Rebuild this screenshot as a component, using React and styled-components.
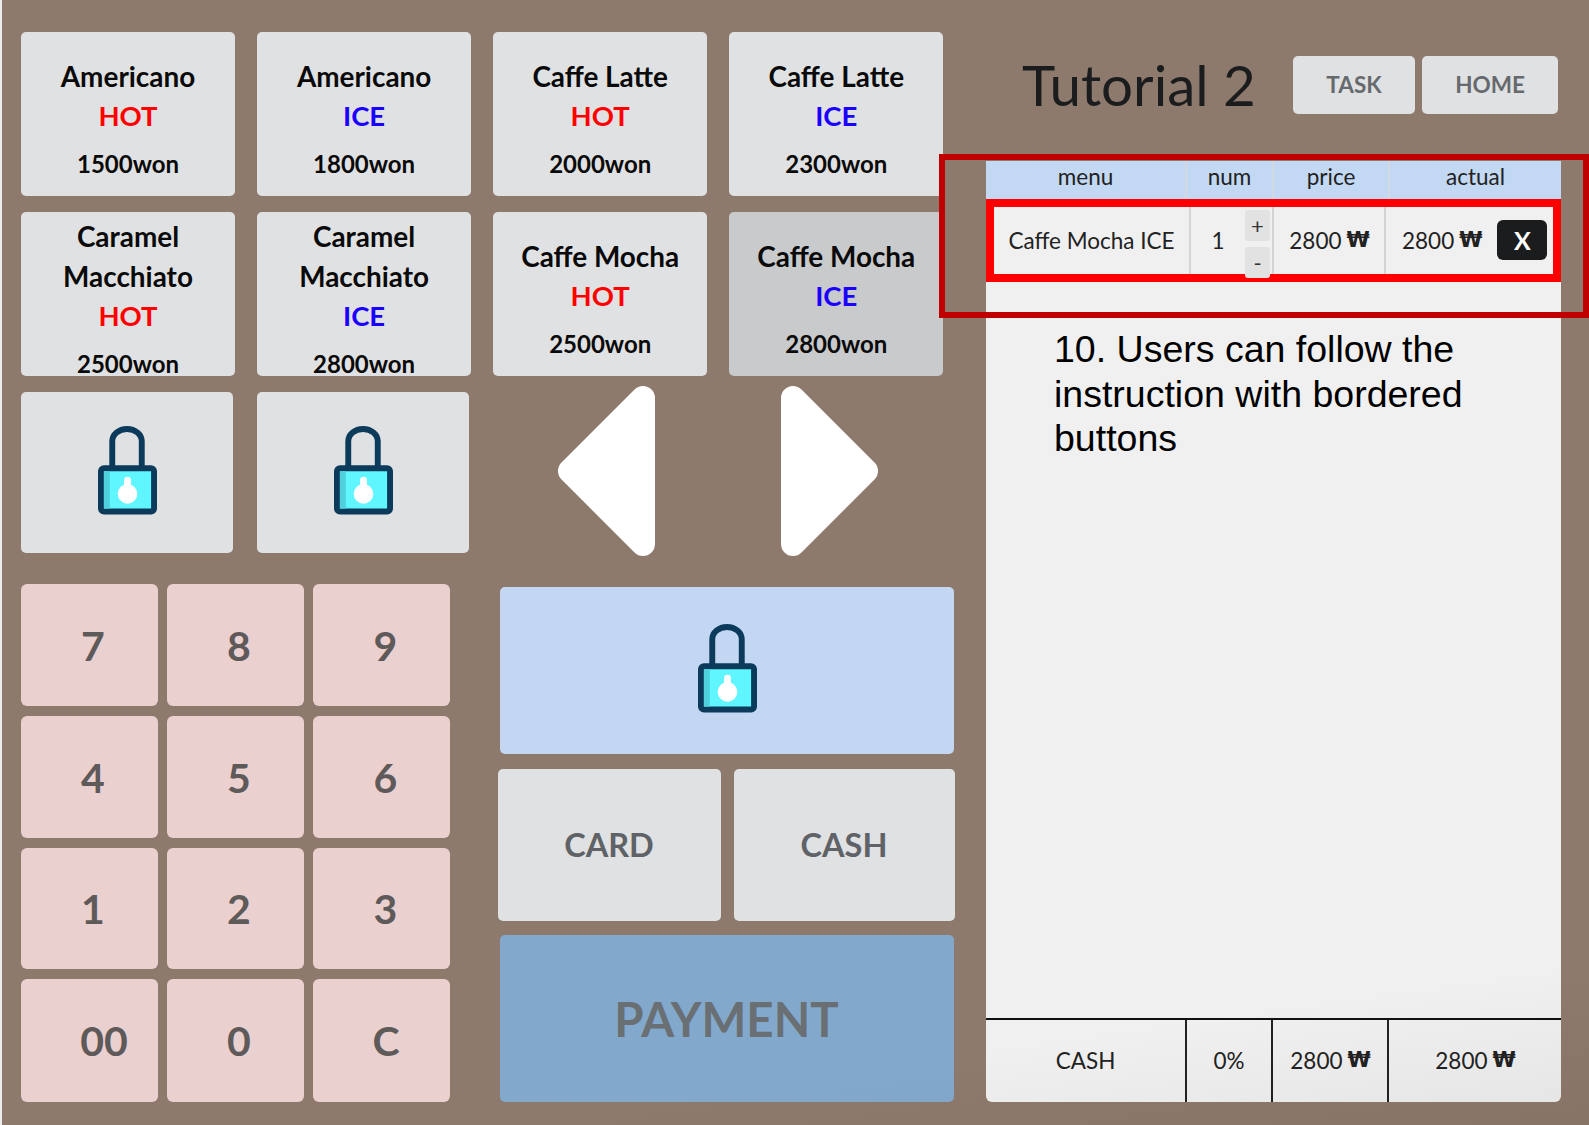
import React from "react";
import styled, { createGlobalStyle } from "styled-components";

const Global = createGlobalStyle`
  html, body { margin: 0; padding: 0; background: #8e7a6c; }
  * { box-sizing: border-box; }
  body { font-family: Lato, "Liberation Sans", sans-serif; }
`;

const Page = styled.div`
  position: relative;
  width: 1589px;
  height: 1125px;
  overflow: hidden;
  background: #8e7a6c;
  border-left: 2px solid #ececec;
  display: flex;
  padding: 32px 0 0 19px;
  &::after {
    content: "";
    position: absolute;
    inset: 0;
    pointer-events: none;
    background: linear-gradient(172deg, rgba(0,0,0,0) 88%, rgba(0,0,0,0.05) 100%);
  }
`;

const LeftColumn = styled.div`
  width: 965px;
  flex: none;
  display: flex;
  flex-direction: column;
`;

const MenuGrid = styled.div`
  display: grid;
  grid-template-columns: repeat(4, 214px);
  grid-auto-rows: 164px;
  column-gap: 22.1px;
  row-gap: 16px;
`;

const MenuCard = styled.div`
  border-radius: 5px;
  background: ${(p) => (p.$selected ? "#c9cacc" : "#e0e1e2")};
  overflow: hidden;
  display: flex;
  flex-direction: column;
  justify-content: center;
  align-items: center;
  font-weight: 700;
  color: #0a0a0a;
  text-align: center;
`;

const MenuName = styled.div`
  font-size: 27.9px;
  line-height: 40px;
`;

const Temp = styled.div`
  font-size: 27.5px;
  line-height: 40px;
  color: ${(p) => (p.$hot ? "#ff0000" : "#1a00ff")};
`;

const Price = styled.div`
  font-size: 24px;
  line-height: 34px;
  margin-top: 11px;
  margin-bottom: -9px;
  white-space: nowrap;
`;

const LockRow = styled.div`
  display: flex;
  align-items: center;
  margin-top: 16px;
  height: 161px;
`;

const LockCard = styled.div`
  width: 212px;
  height: 161px;
  margin-right: 24px;
  padding: 0 0 4px 1px;
  background: #e0e1e2;
  border-radius: 5px;
  display: flex;
  align-items: center;
  justify-content: center;
`;

const ArrowLeft = styled.svg`
  width: 97px;
  height: 170px;
  margin: -4px 0 0 65px;
  flex: none;
`;

const ArrowRight = styled.svg`
  width: 97px;
  height: 170px;
  margin: -4px 0 0 126px;
  flex: none;
`;

const Bottom = styled.div`
  display: flex;
  margin-top: 31px;
`;

const Numpad = styled.div`
  display: grid;
  grid-template-columns: repeat(3, 137px);
  grid-template-rows: 122px 122px 121px 123px;
  column-gap: 9px;
  row-gap: 10px;
  width: 429px;
  flex: none;
`;

const Key = styled.div`
  background: #ebd0d0;
  border-radius: 6px;
  display: flex;
  align-items: center;
  justify-content: center;
  font-size: 41px;
  font-weight: 700;
  color: #5f5a5a;
  padding-left: ${(p) => p.$shift}px;
`;

const PayColumn = styled.div`
  margin-left: 47.5px;
  width: 458px;
  display: flex;
  flex-direction: column;
  padding-top: 3px;
`;

const BlueLock = styled.div`
  margin: 0 2px 0 2px;
  height: 167px;
  padding: 0 0 4px 2px;
  background: #c3d7f2;
  border-radius: 5px;
  display: flex;
  align-items: center;
  justify-content: center;
`;

const PayRow = styled.div`
  display: grid;
  grid-template-columns: 223px 221px;
  column-gap: 13px;
  margin-top: 15px;
  height: 152px;
`;

const PayButton = styled.div`
  background: #e0e1e2;
  border-radius: 5px;
  padding-bottom: 2px;
  display: flex;
  align-items: center;
  justify-content: center;
  font-size: 32.5px;
  font-weight: 700;
  color: #5f6266;
`;

const PaymentButton = styled.div`
  margin: 14px 2px 0 2px;
  height: 167px;
  background: #82a9cc;
  border-radius: 5px;
  display: flex;
  align-items: center;
  justify-content: center;
  font-size: 47.5px;
  font-weight: 700;
  color: #6a6f74;
`;

const RightColumn = styled.div`
  width: 575px;
  margin-top: 24px;
  flex: none;
  display: flex;
  flex-direction: column;
`;

const TitleRow = styled.div`
  height: 105px;
  display: flex;
  align-items: flex-start;
`;

const Title = styled.h1`
  margin: -2px 0 0 36px;
  width: 271px;
  flex: none;
  font-size: 56.5px;
  font-weight: 400;
  line-height: 60px;
  color: #1b1c1d;
  white-space: nowrap;
`;

const TopButton = styled.div`
  width: ${(p) => p.$w}px;
  height: 58px;
  flex: none;
  margin-right: 7px;
  padding-bottom: 1px;
  background: #e0e1e2;
  border-radius: 5px;
  display: flex;
  align-items: center;
  justify-content: center;
  font-size: 22.5px;
  font-weight: 700;
  color: #666a6e;
`;

const Panel = styled.div`
  height: 941px;
  background: #f0f0f0;
  border-radius: 0 0 6px 6px;
  display: flex;
  flex-direction: column;
  color: #222;
  font-size: 22.5px;
`;

const HeaderRow = styled.div`
  height: 38px;
  flex: none;
  display: grid;
  grid-template-columns: 201px 87px 116px 171px;
  background: #c3d8f2;
`;

const HeaderCell = styled.div`
  display: flex;
  align-items: center;
  justify-content: center;
  padding-bottom: 8px;
  border-right: ${(p) => (p.$last ? "none" : "2px solid #d3d9e0")};
`;

const ItemRow = styled.div`
  height: 83px;
  flex: none;
  border: 8px solid #ff0000;
  display: grid;
  grid-template-columns: 197px 83px 112px 167px;
  grid-template-rows: 67px;
`;

const ItemCell = styled.div`
  display: flex;
  align-items: center;
  justify-content: ${(p) => p.$align || "center"};
  padding: 0 0 1px ${(p) => p.$pad || 0}px;
  border-right: ${(p) => (p.$last ? "none" : "2px solid #d4d4d4")};
  white-space: nowrap;
  min-width: 0;
`;

const Count = styled.div`
  width: 54px;
  text-align: center;
`;

const Stepper = styled.div`
  align-self: flex-start;
  margin-top: 3px;
  display: flex;
  flex-direction: column;
  gap: 6px;
`;

const StepButton = styled.div`
  width: 25px;
  height: 31px;
  background: #e2e2e2;
  border-radius: 3px;
  display: flex;
  align-items: center;
  justify-content: center;
  font-size: 22px;
  color: #333;
`;

const RemoveButton = styled.div`
  width: 50px;
  height: 40px;
  margin-left: 16px;
  background: #1b1c1d;
  border-radius: 6px;
  color: #fff;
  font-weight: 700;
  font-size: 25px;
  display: flex;
  align-items: center;
  justify-content: center;
`;

const Instruction = styled.p`
  margin: 45px 0 0 68px;
  width: 445px;
  font-family: "Liberation Sans", Arial, sans-serif;
  font-size: 37.5px;
  line-height: 44.7px;
  color: #000;
  flex: 1;
`;

const FooterRow = styled.div`
  height: 84px;
  flex: none;
  display: grid;
  grid-template-columns: 201px 86px 116px 172px;
  border-top: 2px solid #111;
`;

const FooterCell = styled.div`
  display: flex;
  align-items: center;
  justify-content: center;
  padding-bottom: 2px;
  border-right: ${(p) => (p.$last ? "none" : "2px solid #222")};
`;

const Won = styled.span`
  font-family: "DejaVu Sans", sans-serif;
  font-weight: 700;
  margin-left: 5px;
  font-size: 21px;
  letter-spacing: -1px;
`;

const HighlightFrame = styled.div`
  position: absolute;
  left: 937px;
  top: 154px;
  width: 650px;
  height: 164px;
  border: 6.5px solid #c00000;
  pointer-events: none;
`;

const Lock = ({ size = 59 }) => (
  <svg width={size} height={size * 1.5} viewBox="0 0 60 90">
    <path d="M14.5 44V15.5a15 12.5 0 0 1 15-12.5 15 12.5 0 0 1 15 12.5V44" fill="none" stroke="#0b3a5b" strokeWidth="6" />
    <rect x="3" y="43" width="54" height="44" rx="3" fill="#5ff6ff" stroke="#0b3a5b" strokeWidth="6" />
    <rect x="6" y="46" width="6" height="38" fill="#4fd0dc" />
    <path d="M30 55v8" stroke="#fff" strokeWidth="7" strokeLinecap="round" />
    <circle cx="30" cy="69" r="10" fill="#fff" />
  </svg>
);

const Amount = () => (
  <>
    2800<Won>₩</Won>
  </>
);

const menu = [
  ["Americano", true, "1500won"],
  ["Americano", false, "1800won"],
  ["Caffe Latte", true, "2000won"],
  ["Caffe Latte", false, "2300won"],
  ["Caramel Macchiato", true, "2500won"],
  ["Caramel Macchiato", false, "2800won"],
  ["Caffe Mocha", true, "2500won"],
  ["Caffe Mocha", false, "2800won", true],
];

const keys = [
  ["7", 7], ["8", 7], ["9", 8],
  ["4", 7], ["5", 7], ["6", 8],
  ["1", 7], ["2", 7], ["3", 8],
  ["00", 29], ["0", 7], ["C", 9],
];

export default function App() {
  return (
    <>
      <Global />
      <Page>
        <LeftColumn>
          <MenuGrid>
            {menu.map(([name, hot, price, selected], i) => (
              <MenuCard key={i} $selected={selected}>
                <MenuName>{name.includes("Caramel") ? <>Caramel<br />Macchiato</> : name}</MenuName>
                <Temp $hot={hot}>{hot ? "HOT" : "ICE"}</Temp>
                <Price>{price}</Price>
              </MenuCard>
            ))}
          </MenuGrid>
          <LockRow>
            <LockCard><Lock /></LockCard>
            <LockCard><Lock /></LockCard>
            <ArrowLeft viewBox="0 0 97 170">
              <polygon points="12,85 85,12 85,158" fill="#fff" stroke="#fff" strokeWidth="24" strokeLinejoin="round" />
            </ArrowLeft>
            <ArrowRight viewBox="0 0 97 170">
              <polygon points="85,85 12,12 12,158" fill="#fff" stroke="#fff" strokeWidth="24" strokeLinejoin="round" />
            </ArrowRight>
          </LockRow>
          <Bottom>
            <Numpad>
              {keys.map(([k, s]) => (
                <Key key={k} $shift={s}>{k}</Key>
              ))}
            </Numpad>
            <PayColumn>
              <BlueLock><Lock /></BlueLock>
              <PayRow>
                <PayButton>CARD</PayButton>
                <PayButton>CASH</PayButton>
              </PayRow>
              <PaymentButton>PAYMENT</PaymentButton>
            </PayColumn>
          </Bottom>
        </LeftColumn>
        <RightColumn>
          <TitleRow>
            <Title>Tutorial 2</Title>
            <TopButton $w={122}>TASK</TopButton>
            <TopButton $w={136}>HOME</TopButton>
          </TitleRow>
          <Panel>
            <HeaderRow>
              <HeaderCell>menu</HeaderCell>
              <HeaderCell>num</HeaderCell>
              <HeaderCell>price</HeaderCell>
              <HeaderCell $last>actual</HeaderCell>
            </HeaderRow>
            <ItemRow>
              <ItemCell>Caffe Mocha ICE</ItemCell>
              <ItemCell $align="flex-start">
                <Count>1</Count>
                <Stepper>
                  <StepButton>+</StepButton>
                  <StepButton>-</StepButton>
                </Stepper>
              </ItemCell>
              <ItemCell><Amount /></ItemCell>
              <ItemCell $last $align="flex-start" $pad={16}>
                <Amount />
                <RemoveButton>X</RemoveButton>
              </ItemCell>
            </ItemRow>
            <Instruction>10. Users can follow the instruction with bordered buttons</Instruction>
            <FooterRow>
              <FooterCell>CASH</FooterCell>
              <FooterCell>0%</FooterCell>
              <FooterCell><Amount /></FooterCell>
              <FooterCell $last><Amount /></FooterCell>
            </FooterRow>
          </Panel>
        </RightColumn>
        <HighlightFrame />
      </Page>
    </>
  );
}
